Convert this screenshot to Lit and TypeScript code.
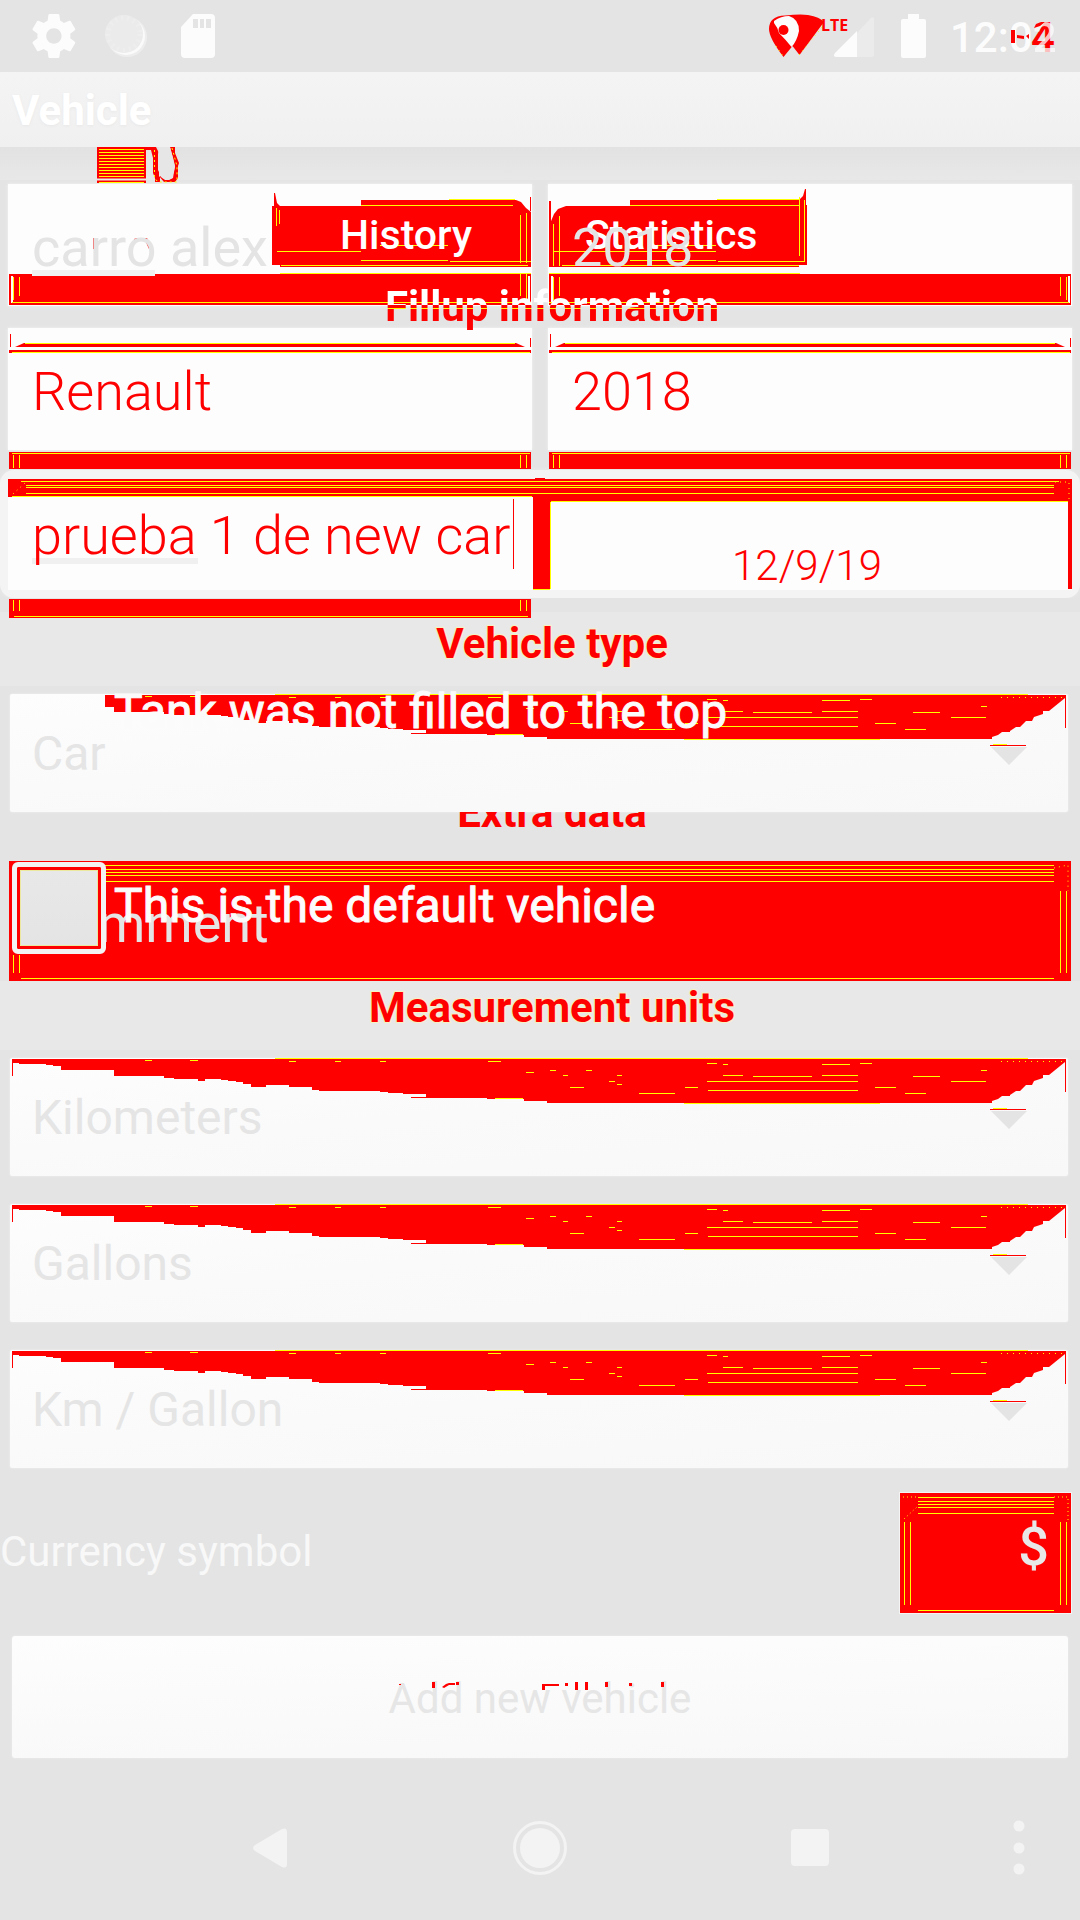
import { LitElement, html, css, svg } from "lit";
import { customElement } from "lit/decorators.js";

const yellowRows = (ys: number[], x1: number, x2: number) =>
  ys.map((y) => svg`<path d="M${x1} ${y}H${x2}" />`);
const yellowCols = (xs: number[], y1: number, y2: number) =>
  xs.map((x) => svg`<path d="M${x} ${y1}V${y2}" />`);

@customElement("unit-select")
export class UnitSelect extends LitElement {
  static properties = { label: {}, value: {}, short: { type: Boolean } };
  declare label: string;
  declare value: string;
  declare short: boolean;

  static styles = css`
    :host { display: block; position: relative; height: 118px; margin: 0 12px 0 10px;
      background: linear-gradient(175deg, #fdfdfd, #fafafa 45%, #f8f8f8);
      box-shadow: 0 0 2px #f4f4f4; border-radius: 2px; }
    .wedge { position: absolute; left: 0; top: 0; width: 100%; height: 100%; pointer-events: none; }
    select { position: relative; width: 100%; height: 118px; padding: 2px 22px 0; border: 0;
      background: transparent; appearance: none; color: #e5e5e5;
      font: 400 48px/56px Roboto, sans-serif; }
  `;

  render() {
    const start = this.short
      ? "M95 1V13H104V18H154"
      : "M2 1V5H9V6H36V7H43V8H51V12H104V18H154";
    return html`
      <svg class="wedge" viewBox="0 0 1058 118" preserveAspectRatio="none" aria-hidden="true">
        <path fill="#f00" d="${start}V20H164V21H188V23H195V21H211V22H218V23H226V24H233V26H241V29H256V27H279V29H302V32H309V33H370V34H378V35H393V36H416V40H477V41H514V43H537V45H982V43L988 41L992 38H1000V37L1006 33H1010L1016 27H1022L1024 23L1033 20V17H1039L1055 4V1Z" />
        <path stroke="#f00" d="M1055.5 1V34M401 39.500H416${this.short ? "" : "M2.500 4V18"}" />
        <path fill="#fdfdfd" d="M401 36H416V39H401Z" />
        <g stroke="#ff0">
          <path d="M265 .5H1018M135 2.500H142M180 2.500H188M279 3.500H286M325 3.500H331M370 3.500H376M478 3.500H491M516 14.500H524M540 12.500H546M553 17.500H558" />
          <path d="M697 5.500H707M713 6.500H718M812 6.500H840M850 5.500H862M713 17.500H733M743 18.500H802M812 17.500H848M697 23.500H848M698 32.500H848M865 29.500H886M903 18.500H930M895 35.500H916M941 23.500H976M971 12.500H977" />
          <path d="M485 40.500H513M674 45.500H870M629 35.500H665M560 29.500H574M675 29.500H688M576 12.500H582M607 17.500H612M599 23.500H605M607 26.500H612" />
          <path stroke-dasharray="1 5" d="M991 3.500H1054" />
        </g>
        <path fill="#e4e4e4" d="M981 53H1017L999 71Z" />
        <path stroke="#f00" d="M980 51.500H1016" />
        <path stroke="#ff0" d="M983 50.500H997" />
      </svg>
      <select aria-label=${this.label}><option>${this.value}</option></select>
    `;
  }
}

@customElement("app-root")
export class AppRoot extends LitElement {
  static styles = css`
    :host { display: block; position: relative; min-height: 100vh; overflow: hidden;
      background: #e4e4e4; font-family: Roboto, "Liberation Sans", sans-serif; }
    * { box-sizing: border-box; }
    input, button { font-family: inherit; border: 0; margin: 0; background: transparent; border-radius: 0; }

    .status { display: flex; justify-content: space-between; height: 72px; }
    .status-left { width: 230px; height: 72px; }
    .status-right { display: flex; position: relative; width: 320px; height: 72px; }
    .signals { width: 190px; height: 72px; flex: none; }
    .clock { font-size: 42px; line-height: 48px; font-weight: 500; color: #fcfcfc; padding-top: 14px; }
    .clock-ghost { position: absolute; left: 271px; top: 14px; color: #f00;
      font-size: 42px; line-height: 48px; font-weight: 500; }
    .clock-last { opacity: 0.75; position: relative; z-index: 1; }
    .lte { position: absolute; left: 61px; top: 13px; color: #f00;
      font: 700 16px/24px "Liberation Sans Narrow", "Open Sans", sans-serif; }

    .appbar { height: 75px; background: linear-gradient(#f4f4f4, #f0f0f0); padding: 12px; }
    h1 { margin: 0; font-size: 42px; line-height: 54px; font-weight: 700; color: #fff;
      text-shadow: 0 1px 3px #e8e8e8; }
    .strip { height: 33px; background: linear-gradient(#e2e2e2, #e8e8e8); }

    .pair { display: grid; grid-template-columns: 1fr 1fr; gap: 16px; padding: 0 8px; margin-top: 4px; }
    .pair + .pair { margin-top: 22px; }
    .card { height: 122px; background: #fdfdfd; box-shadow: 0 0 3px #f4f4f4; padding: 32px 18px 0 24px; }
    .entry { position: relative; z-index: 2; display: block; width: 100%; height: 64px; padding: 0;
      font-size: 54px; line-height: 64px; color: #e4e4e4; }
    .hot { color: #f00; font-weight: 350; }

    .panel { display: grid; grid-template-columns: 1fr 1fr; height: 128px; margin-top: 20px;
      padding: 9px 8px; background: #f4f4f4; border-radius: 14px; box-shadow: 0 0 4px #ececec; }
    .panel-left { background: #fdfdfd; padding: 25px 20px 0 24px; margin-right: 7px; overflow: hidden; }
    .panel-right { background: #fdfdfd; }
    .date { position: relative; z-index: 2; width: 100%; height: 48px; margin-top: 63px; padding: 0 0 0 2px;
      text-align: center; font-size: 42px; line-height: 48px; font-weight: 300; color: #f00; }

    .heading { margin: 0; padding: 22px 0 26px 24px; text-align: center; font-size: 42px; line-height: 48px;
      font-weight: 700; color: #f00; -webkit-text-stroke: 2px #f8f2c0; paint-order: stroke fill;
      background: linear-gradient(#e4e4e4 14px, #e8e8e8 14px, #e8e8e8 88px, #e4e4e4 88px); }
    .heading-tight { padding: 3px 0 26px 24px;
      background: linear-gradient(#e8e8e8 69px, #e4e4e4 69px); }

    .default { position: relative; height: 120px; margin: 49px 9px 0; background: #f00; }
    .default .lines { position: absolute; left: 0; top: 0; width: 100%; height: 100%; }
    .comment { position: absolute; left: 23px; top: 31px; font-size: 54px; line-height: 64px; color: #e4e4e4; }
    .check { position: relative; display: flex; gap: 8px; padding: 1px 3px; font-size: 48px; line-height: 56px; color: #fcfcfc; }
    .check input { appearance: none; flex: none; width: 94px; height: 92px; border: 5px solid #f3f3f3;
      border-radius: 6px; background: linear-gradient(#e8e8e8, #e4e4e4);
      box-shadow: inset 0 0 0 3px #f00, inset 0 0 0 4px #ece8a0; }
    .check span { padding-top: 16px; }

    .units { display: grid; gap: 28px; }
    .currency { display: flex; justify-content: space-between; align-items: center; height: 120px;
      margin: 25px 9px 0 0; font-size: 42px; line-height: 48px; color: #f8f8f8; }
    .currency label { padding-bottom: 2px; }
    .symbol { position: relative; width: 171px; height: 120px; background: #f00; outline: 1px solid #f4f4f4; }
    .symbol svg { position: absolute; left: 0; top: 0; }
    .symbol input { position: relative; width: 171px; height: 120px; padding: 0 22px 14px; text-align: right;
      font-size: 54px; line-height: 64px; font-weight: 500; color: #e8e8e8; }
    .add { display: block; width: calc(100% - 24px); height: 122px; margin: 23px 12px 0;
      padding: 4px 0 0; border-radius: 3px; background: linear-gradient(178deg, #fdfdfd, #f8f8f8);
      box-shadow: 0 0 2px #f0f0f0; font-size: 42px; line-height: 48px; color: #e6e6e6; }

    .nav { height: 162px; }
    .nav svg { display: block; width: 100%; height: 100%; }

    .ghost { position: absolute; left: 0; top: 0; width: 100%; height: 1920px; z-index: 1; pointer-events: none; }
    .ghost-tab { position: absolute; z-index: 1; top: 211px; padding: 0; font-size: 41px; line-height: 48px;
      font-weight: 500; color: #fff; }
    .tab-history { left: 340px; }
    .tab-stats { left: 585px; }
    .ghost-title { position: absolute; z-index: 2; left: 24px; right: 0; top: 283px; margin: 0; text-align: center;
      font-size: 42px; line-height: 48px; font-weight: 700; color: transparent;
      background: linear-gradient(#fff 22px, #f00 22px, #f00 25px, #ff0 25px, #ff0 26px, #f00 26px);
      -webkit-background-clip: text; background-clip: text; }
    .ghost-tank { position: absolute; z-index: 1; left: 114px; top: 684px; font-size: 48px; line-height: 56px; color: #fbfbfb;
      -webkit-text-stroke: 1px #fbfbfb; }
    .bold-ghost { -webkit-text-stroke: 1px #fcfcfc; }
    .ghost-extra { position: absolute; left: 24px; right: 0; top: 812px; height: 30px; overflow: hidden;
      display: flex; justify-content: center; align-items: flex-end; }
    .ghost-extra span { font-size: 42px; line-height: 48px; font-weight: 700; color: #f00;
      padding-bottom: 5px; }
  `;

  render() {
    return html`
      <header class="status">
        <svg class="status-left" viewBox="0 0 230 72" aria-hidden="true">
          <path fill="#fcfcfc" transform="translate(27.500 9.600) scale(2.200)" d="M19.430 12.980c.04-.32.07-.64.07-.98s-.03-.66-.07-.98l2.110-1.650c.19-.15.24-.42.12-.64l-2-3.460c-.12-.22-.39-.3-.61-.22l-2.490 1c-.52-.4-1.080-.73-1.690-.98l-.38-2.650C14.460 2.180 14.250 2 14 2h-4c-.25 0-.46.18-.49.42l-.38 2.650c-.61.25-1.170.59-1.690.98l-2.490-1c-.23-.09-.49 0-.61.22l-2 3.460c-.13.22-.07.49.12.64l2.110 1.650c-.04.32-.07.65-.07.98s.03.66.07.98l-2.110 1.650c-.19.15-.24.42-.12.64l2 3.460c.12.22.39.3.61.22l2.490-1c.52.4 1.080.73 1.690.98l.38 2.650c.03.24.24.42.49.42h4c.25 0 .46-.18.49-.42l.38-2.650c.61-.25 1.170-.59 1.690-.98l2.490 1c.23.09.49 0 .61-.22l2-3.460c.12-.22.07-.49-.12-.64l-2.110-1.650zM12 15.500c-1.930 0-3.500-1.570-3.500-3.500s1.570-3.500 3.500-3.500 3.500 1.570 3.500 3.500-1.570 3.500-3.500 3.500z" />
          <circle cx="127" cy="37" r="20" fill="#ededed" />
          <circle cx="126" cy="36" r="19" fill="#fafafa" />
          <circle cx="124" cy="34" r="19" fill="#ebebeb" />
          <circle cx="124" cy="34" r="16" fill="none" stroke="#eeeeee" stroke-width="5" stroke-dasharray="2 4" />
          <path fill="#fcfcfc" d="M193 14H211Q215 14 215 18V54Q215 58 211 58H185Q181 58 181 54V27Z" />
          <path fill="#e4e4e4" d="M193 19h5v9h-5zM200 19h4v9h-4zM206 19h5v9h-5z" />
        </svg>
        <div class="status-right">
          <svg class="signals" viewBox="760 0 190 72" aria-hidden="true">
            <path fill="#f00" d="M783.500 57Q769 38 769 29Q769 16 785 15.500Q800 14 808 15Q820 17 824 22L799.500 55L792.500 46Z" />
            <path fill="#fcfcfc" d="M774 21Q781 16 789 16Q799 19 799 31Q797 41 791.500 47Q786 40 779 33Q778 28 774 23Z" />
            <circle cx="783.500" cy="30" r="5" fill="#f00" />
            <path stroke="#ff0" d="M776 46L783 56M799 55L823 26" stroke-dasharray="1 4" />
            <path fill="#ebebeb" d="M857 33L871 18Q874 16 874 19V54Q874 57 871 57H857Z" />
            <path fill="#fcfcfc" d="M857 31V57H837Q832 57 835 53Z" />
            <path fill="#fcfcfc" d="M908 14H919V19H924Q926 19 926 21V56Q926 58 924 58H903Q901 58 901 56V21Q901 19 903 19H908Z" />
          </svg>
          <span class="lte">LTE</span>
          <span class="clock-ghost">4</span>
          <time class="clock">12:0<span class="clock-last">2</span></time>
        </div>
      </header>
      <div class="appbar"><h1>Vehicle</h1></div>
      <div class="strip"></div>

      <section class="pair">
        <div class="card"><input class="entry" aria-label="Name" value="carro alex" /></div>
        <div class="card"><input class="entry" aria-label="Year" value="2018" /></div>
      </section>
      <section class="pair">
        <div class="card"><input class="entry hot" aria-label="Brand" value="Renault" /></div>
        <div class="card"><input class="entry hot" aria-label="Model year" value="2018" /></div>
      </section>
      <section class="panel">
        <div class="panel-left"><input class="entry hot" aria-label="Comment" value="prueba 1 de new car" /></div>
        <div class="panel-right"><input class="date" aria-label="Date" value="12/9/19" /></div>
      </section>

      <h2 class="heading">Vehicle type</h2>
      <unit-select label="Vehicle type" value="Car" short></unit-select>

      <section class="default">
        <svg class="lines" viewBox="0 0 1062 120" preserveAspectRatio="none" aria-hidden="true" stroke="#ff0" fill="none">
          ${yellowRows([4.5, 8.5, 11.5, 14.5, 20.5], 96, 1045)}
          ${yellowRows([117.5], 12, 1045)}
          ${yellowCols([1051.5, 1057.5], 30, 112)}
          ${yellowCols([4.5, 10.5], 94, 112)}
          <path stroke-dasharray="1 4" d="M1045 7L1059 4V30" />
        </svg>
        <span class="comment">Comment</span>
        <label class="check"><input type="checkbox" /><span class="bold-ghost">This is the default vehicle</span></label>
      </section>

      <h2 class="heading heading-tight">Measurement units</h2>
      <section class="units">
        <unit-select label="Distance" value="Kilometers"></unit-select>
        <unit-select label="Volume" value="Gallons"></unit-select>
        <unit-select label="Consumption" value="Km / Gallon"></unit-select>
      </section>

      <section class="currency">
        <label for="symbol">Currency symbol</label>
        <div class="symbol">
          <svg width="171" height="120" aria-hidden="true" stroke="#ff0" fill="none">
            ${yellowRows([4.5, 8.5, 11.5, 14.5, 20.5], 18, 154)}
            ${yellowRows([117.5], 18, 154)}
            ${yellowCols([4.5, 10.5, 160.5, 166.5], 29, 112)}
            <path stroke-dasharray="1 3" d="M4 26L18 13M3 4H18M154 4H168V28" />
          </svg>
          <input id="symbol" value="$" />
        </div>
      </section>
      <button class="add">Add new vehicle</button>

      <nav class="nav">
        <svg viewBox="0 1758 1080 162" aria-hidden="true" fill="#f3f3f3">
          <path d="M255 1845L282 1829Q287 1827 287 1832V1864Q287 1869 282 1867L255 1851Q251 1848 255 1845Z" />
          <circle cx="540" cy="1848" r="25.500" fill="none" stroke="#f3f3f3" stroke-width="3" />
          <circle cx="540" cy="1848" r="20" />
          <rect x="791" y="1829" width="38" height="37" rx="4" />
          <circle cx="1019" cy="1826" r="5.500" /><circle cx="1019" cy="1848" r="5.500" /><circle cx="1019" cy="1869" r="5.500" />
        </svg>
      </nav>

      <svg class="ghost" viewBox="0 0 1080 1920" preserveAspectRatio="none" aria-hidden="true" fill="none">
        <path fill="#f00" d="M97 147H156L159 153V176L164 182H175L178 178V166L179 163L175 153V147H170L173 158L175 166L173 178L169 180H165L160 176V182H155V178L153 173V158L151 150H146V183H97Z" />
        <path fill="#e6e6e6" d="M159 147H170L173 158L175 167L172 178L168 180L162 178L158 170V154Z" />
        <g stroke="#ff0">
          ${yellowRows([149.5, 152.5, 155.5, 158.5, 161.5, 164.5, 167.5, 170.5, 173.5, 176.5, 182.5], 99, 144)}
          <path stroke-dasharray="2 3" d="M154.500 150V178L158 182H177V166L172 148" />
        </g>
        <path stroke="#e8e8e8" stroke-width="2" d="M97 179.500H146" />

        <path fill="#f00" d="M272 206V265H280V267H531V212L526 208L521 202L516 200H361V206H280L277 203L275 193H274V206Z" />
        <path fill="#f00" d="M549 267V226L554 214L558 209L566 206H630V200H799L803 196L805 189H806V205H807V265H799V267Z" />
        <g stroke="#ff0">
          <path d="M361 205.500H513M449 199.500H515M277 251.500H361M361 260.500H448M380 245.500H448M450 261.500H531M281 265.500H528M280 273.500H531M276.500 208V226M279.500 210V224M520.500 215V263M526.500 213V263" />
          <path d="M630 205.500H799M717 199.500H799M553 251.500H716M630 260.500H716M655 245.500H716M718 261.500H805M562 265.500H799M549 273.500H800M553.500 224V266M559.500 216V266M799.500 197V256M804.500 200V262" />
        </g>
        <path fill="#f00" d="M93 238h1v11h-1zM113 238h2v11h-2zM134 239l3-1h4v3h-4l-3 3zM144 238h3l5 11h-3zM181 238h3v2h-3zM530 197h1v14h-1zM549 201h2v25h-2z" />

        <path fill="#f00" d="M9 274H531V305H9ZM549 274H1071V305H549Z" />
        <path stroke="#fdfdfd" stroke-width="2" d="M12 276V303M529 276V303M552 276V303M1069 276V303" />
        <path stroke="#ff0" d="M12 302.500H531M549 302.500H1069M13.500 277V300M19.500 277V296M520.500 274V296M526.500 274V300M553.500 277V300M559.500 277V296M1060.500 277V296M1066.500 277V300" />
        <path fill="#f0f0f0" d="M32 270H155V276H32ZM32 558H198V564H32Z" />

        <path fill="#f00" d="M15 347L24 343H516L525 347ZM9 350H531V353H9ZM555 347L564 343H1056L1065 347ZM549 350H1071V353H549Z" />
        <path stroke="#ff0" d="M25 343.500H515M12 352.500H530M565 343.500H1055M552 352.500H1070" />
        <path stroke="#f00" d="M10.500 334V347M530.500 338V347M550.500 334V347M1070.500 338V347" />

        <path fill="#f00" d="M9 452H531V469H9ZM549 452H1071V469H549ZM9 599H531V618H9Z" />
        <path stroke="#ff0" d="M12 453.500H530M552 453.500H1070M13.500 455V468M19.500 455V468M520.500 455V468M526.500 455V468M553.500 455V468M559.500 455V468M1060.500 455V468M1066.500 455V468M13.500 600V611M19.500 600V611M520.500 600V611M526.500 600V611M14 616.500H528" />

        <path fill="#f00" d="M8 479H535V478H545V479H1072V589H1068V502H550V589H533V497H8Z" />
        <path stroke="#ff0" d="M21 481.500H1059M26 485.500H1054M26 487.500H1054M26 493.500H1054M12 496.500H532M551 501.500H1068M550.500 502V589M533 589.500H550" />
        <path stroke="#ff0" stroke-dasharray="1 4" d="M13 494L25 483M1055 482H1069V500" />
        <path stroke="#f00" d="M513.500 499V569" />

        <path fill="#f00" d="M432 1682h3v6h-3zM442 1687l4-3 3-1h6v2h-6l-5 3zM456 1682h3v3h-3zM399 1684h2v1h-2zM542 1684h17v2h-14v4h-3zM565 1683h3v3h-3zM575 1682h3v8h-3zM585 1682h3v8h-3zM605 1682h3v5h-3zM629 1683h3v3h-3zM661 1682h3v5h-3z" />
        <path fill="#f00" d="M1011 30h4v13h-4zM1017 35l7 1v3l-7-1zM1026 36l3-2v5zM1034 28l2-4 5-2h4l-5 4z" />
      </svg>
      <button class="ghost-tab tab-history">History</button>
      <button class="ghost-tab tab-stats">Statistics</button>
      <h2 class="ghost-title">Fillup information</h2>
      <span class="ghost-tank">Tank was not filled to the top</span>
      <div class="ghost-extra"><span>Extra data</span></div>
    `;
  }
}
